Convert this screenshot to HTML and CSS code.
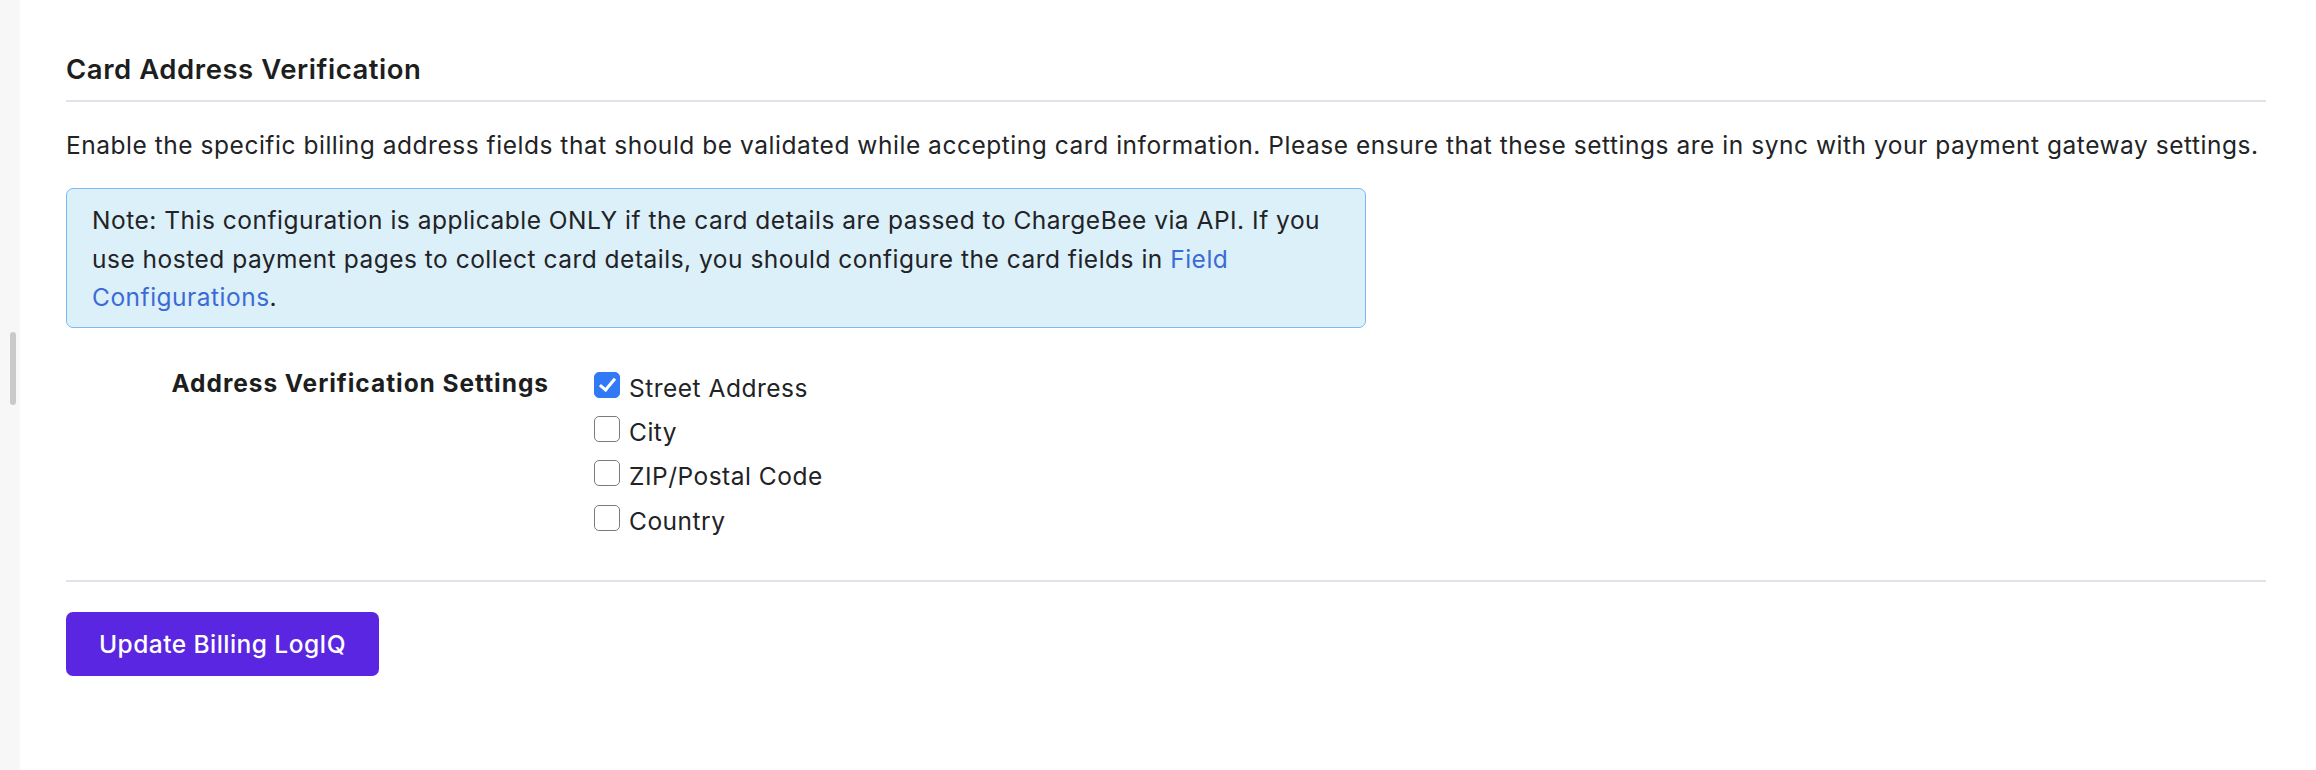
FILE: index.html
```html
<!DOCTYPE html>
<html lang="en">
<head>
<meta charset="utf-8">
<title>Card Address Verification</title>
<link rel="stylesheet" href="styles.css">
</head>
<body>
<div class="page">
  <div class="rail"><div class="thumb"></div></div>
  <main class="main">
    <h2 class="title">Card Address Verification</h2>
    <hr class="rule">
    <p class="desc">Enable the specific billing address fields that should be validated while accepting card information. Please ensure that these settings are in sync with your payment gateway settings.</p>
    <div class="note">Note: This configuration is applicable ONLY if the card details are passed to ChargeBee via API. If you use hosted payment pages to collect card details, you should configure the card fields in <a class="link" href="#">Field Configurations</a>.</div>
    <div class="form-row">
      <div class="label">Address Verification Settings</div>
      <div class="options">
        <label class="opt"><input class="cb" type="checkbox" checked><span>Street Address</span></label>
        <label class="opt"><input class="cb" type="checkbox"><span>City</span></label>
        <label class="opt"><input class="cb" type="checkbox"><span>ZIP/Postal Code</span></label>
        <label class="opt"><input class="cb" type="checkbox"><span>Country</span></label>
      </div>
    </div>
    <hr class="rule rule-bottom">
    <button class="btn" type="button">Update Billing LogIQ</button>
  </main>
</div>
</body>
</html>
```
FILE: styles.css
```css
html, body {
  margin: 0;
  padding: 0;
  background: #ffffff;
}
body {
  font-family: Inter, "Noto Sans", "Liberation Sans", sans-serif;
  color: #222326;
  width: 2316px;
  height: 770px;
  overflow: hidden;
}
.page {
  display: flex;
  height: 770px;
}
.rail {
  width: 20px;
  flex: none;
  background: #f7f7f8;
  padding-top: 332px;
  box-sizing: border-box;
}
.thumb {
  width: 6px;
  height: 73px;
  margin-left: 10px;
  border-radius: 3px;
  background: #c9c9cb;
}
.main {
  padding-left: 46px;
  width: 2200px;
  padding-top: 53px;
}
.title {
  margin: 0;
  font-size: 27.5px;
  line-height: 32px;
  font-weight: 600;
  letter-spacing: 0.55px;
  color: #1d1e20;
}
.rule {
  margin: 15px 0 0 0;
  border: 0;
  height: 2px;
  background: #dfe3ec;
}
.desc {
  margin: 24px 0 0 0;
  font-size: 24.5px;
  letter-spacing: 0.53px;
  line-height: 38.4px;
  white-space: nowrap;
}
.note {
  margin-top: 24px;
  width: 1300px;
  box-sizing: border-box;
  background: #dcf0fa;
  border: 1.5px solid #80b8f3;
  border-radius: 7px;
  padding: 12px 26px 10px 25px;
  font-size: 24.5px;
  letter-spacing: 0.5px;
  line-height: 38.4px;
}
.link {
  color: #3b6bd5;
  text-decoration: none;
}
.form-row {
  display: flex;
  margin-top: 36px;
  align-items: flex-start;
}
.label {
  width: 483px;
  flex: none;
  text-align: right;
  font-size: 24.5px;
  line-height: 38.4px;
  font-weight: 700;
  letter-spacing: 0.95px;
  color: #1d1e20;
  padding-right: 45px;
  white-space: nowrap;
}
.options {
  display: flex;
  flex-direction: column;
  padding-top: 2px;
}
.opt {
  display: flex;
  align-items: flex-start;
  height: 44.3px;
  font-size: 24.5px;
  letter-spacing: 0.5px;
  line-height: 44.3px;
}
.cb {
  appearance: none;
  -webkit-appearance: none;
  margin: 6px 9px 0 0;
  width: 26px;
  height: 26px;
  box-sizing: border-box;
  border: 1.5px solid #7b7b7d;
  border-radius: 5px;
  background: #ffffff;
  position: relative;
  flex: none;
}
.cb:checked {
  background: #3179f5;
  border-color: #3179f5;
}
.cb:checked::after {
  content: "";
  position: absolute;
  left: 7.5px;
  top: 2.5px;
  width: 6px;
  height: 13px;
  border-right: 3.5px solid #ffffff;
  border-bottom: 3.5px solid #ffffff;
  transform: rotate(40deg);
}
.rule-bottom {
  margin-top: 37px;
}
.btn {
  margin-top: 30px;
  height: 64px;
  padding: 0 33px;
  border: 0;
  border-radius: 7px;
  background: #5b26e1;
  color: #ffffff;
  font-family: Inter, "Noto Sans", "Liberation Sans", sans-serif;
  font-size: 24.5px;
  letter-spacing: 0.45px;
  font-weight: 500;
  display: block;
}
```
